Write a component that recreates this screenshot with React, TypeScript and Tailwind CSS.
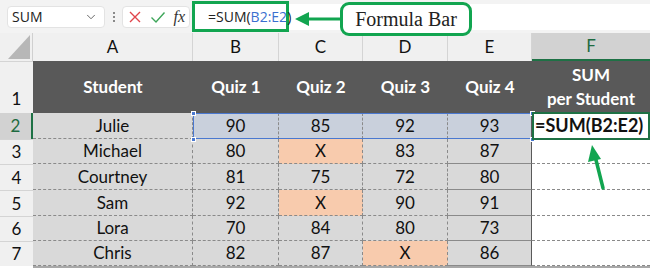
import { ChevronDown } from "lucide-react"

const cols = ["A", "B", "C", "D", "E", "F"]

const students = [
  { name: "Julie", q: ["90", "85", "92", "93"] },
  { name: "Michael", q: ["80", "X", "83", "87"] },
  { name: "Courtney", q: ["81", "75", "72", "80"] },
  { name: "Sam", q: ["92", "X", "90", "91"] },
  { name: "Lora", q: ["70", "84", "80", "73"] },
  { name: "Chris", q: ["82", "87", "X", "86"] },
]

const rowHeights = ["h-[26px]", "h-[25px]", "h-[26px]", "h-[26px]", "h-[25px]", "h-[25px]"]

function Toolbar() {
  return (
    <div className="h-[33px] bg-[#f3f3f3] flex items-center pl-[7px]">
      <div className="w-[98px] h-[22px] bg-white rounded-[4px] border border-[#e3e3e3] flex items-center justify-between pl-[4px] pr-[6px]">
        <span className="text-[14px] text-[#222]" style={{ fontFamily: "'Open Sans', sans-serif" }}>
          SUM
        </span>
        <ChevronDown size={14} strokeWidth={1.5} className="text-[#555]" />
      </div>
      <div className="flex flex-col gap-[2px] ml-[8px]">
        <span className="w-[2px] h-[2px] bg-[#666] rounded-full" />
        <span className="w-[2px] h-[2px] bg-[#666] rounded-full" />
        <span className="w-[2px] h-[2px] bg-[#666] rounded-full" />
      </div>
      <div className="w-[68px] h-[22px] ml-[7px] bg-white rounded-[4px] border border-[#e3e3e3] flex items-center justify-between pl-[5px] pr-[4px]">
        <svg width="14" height="14" viewBox="0 0 14 14">
          <path d="M2 2 L12 12 M12 2 L2 12" stroke="#e0454b" strokeWidth="1.4" fill="none" />
        </svg>
        <svg width="16" height="14" viewBox="0 0 16 14">
          <path d="M1.5 7.5 L6 12 L14.5 2.5" stroke="#3ea65a" strokeWidth="1.4" fill="none" />
        </svg>
        <span className="text-[16px] italic text-[#333] leading-none" style={{ fontFamily: "'Liberation Serif', serif" }}>
          fx
        </span>
      </div>
      <div className="flex-1 h-[26px] bg-white ml-[2px] flex items-center">
        <div className="w-[97px] h-[31px] border-[3px] border-[#12a550] flex items-center pl-[13px]">
          <span className="text-[14px] text-[#222]" style={{ fontFamily: "'Open Sans', sans-serif" }}>
            =SUM(<span className="text-[#3a6fcf]">B2:E2</span>)
          </span>
        </div>
      </div>
    </div>
  )
}

export default function App() {
  const font = { fontFamily: "Lato, 'Noto Sans', sans-serif" }
  return (
    <div className="relative w-[650px] h-[268px] overflow-hidden bg-white" style={font}>
      <Toolbar />

      <div className="grid grid-cols-[33px_160px_86px_84px_85px_84px_118px] text-[#111]">
        {/* column letters */}
        <div className="h-[28px] bg-[#f0f0f0] border-r border-[#d0d0d0] flex items-end justify-end p-[2px]">
          <svg width="22" height="24" viewBox="0 0 22 24">
            <path d="M22 0 L22 24 L0 24 Z" fill="#b7b7b7" />
          </svg>
        </div>
        {cols.map((c) => (
          <div
            key={c}
            className={
              c === "F"
                ? "h-[28px] bg-[#d2d2d2] text-[#1e6b41] border-b-2 border-[#1e7145] flex items-center justify-center text-[17px]"
                : "h-[28px] bg-[#f0f0f0] border-r border-[#d4d4d4] flex items-center justify-center text-[17px]"
            }
          >
            {c}
          </div>
        ))}

        {/* row 1 header */}
        <div className="h-[52px] bg-[#f0f0f0] border-t border-[#d4d4d4] flex items-end justify-center pb-[2px] text-[17px]">
          1
        </div>
        <div className="h-[52px] bg-[#595959] text-white font-bold text-[17px] flex items-center justify-center">Student</div>
        {["Quiz 1", "Quiz 2", "Quiz 3", "Quiz 4"].map((q) => (
          <div key={q} className="h-[52px] bg-[#595959] text-white font-bold text-[17px] flex items-center justify-center">
            {q}
          </div>
        ))}
        <div className="h-[52px] bg-[#595959] text-white font-bold text-[17px] leading-[24px] flex flex-col items-center justify-center">
          <span>SUM</span>
          <span>per Student</span>
        </div>

        {students.map((s, i) => {
          const h = rowHeights[i]
          const selected = i === 0
          return [
            <div
              key={`rh${i}`}
              className={
                selected
                  ? `${h} bg-[#d2d2d2] text-[#1e6b41] border-r-2 border-[#1e7145] flex items-center justify-center text-[17px]`
                  : `${h} bg-[#f0f0f0] border-t border-[#d4d4d4] flex items-center justify-center text-[17px]`
              }
            >
              {i + 2}
            </div>,
            <div
              key={`n${i}`}
              className={`${h} bg-[#d9d9d9] border-b border-r border-dashed border-[#8a8a8a] flex items-center justify-center text-[17px]`}
            >
              {s.name}
            </div>,
            ...s.q.map((v, j) => (
              <div
                key={`q${i}${j}`}
                className={`${h} ${
                  selected ? "bg-[#c9d0dc]" : v === "X" ? "bg-[#f8cbad]" : "bg-[#d9d9d9]"
                } border-b border-r border-dashed border-[#8a8a8a] flex items-center justify-center text-[17px] ${
                  j === 3 ? "border-solid border-r-[#595959]" : ""
                }`}
              >
                {v}
              </div>
            )),
            <div
              key={`f${i}`}
              className={`${h} bg-white border-b border-dashed border-[#8a8a8a] flex items-center pl-[3px] text-[18px] font-bold`}
            >
              {selected ? "=SUM(B2:E2)" : ""}
            </div>,
          ]
        })}
      </div>
      <div className="h-[2px] bg-[#a8a8a8] ml-[33px]" />

      {/* selection B2:E2 */}
      <div className="absolute left-[193px] top-[113px] w-[340px] h-[26px] border border-[#4a78d0] pointer-events-none" />
      {[
        [191, 111],
        [191, 137],
        [530, 111],
        [530, 137],
      ].map(([x, y], k) => (
        <div key={k} className="absolute w-[5px] h-[5px] bg-[#4a78d0] border border-white" style={{ left: x, top: y }} />
      ))}

      {/* active cell F2 */}
      <div className="absolute left-[532px] top-[112px] w-[118px] h-[28px] border-2 border-[#1e7145] pointer-events-none" />

      {/* formula bar callout */}
      <svg className="absolute left-[293px] top-[10px]" width="50" height="18" viewBox="0 0 50 18">
        <path d="M14 9 L50 9" stroke="#12a550" strokeWidth="3" />
        <path d="M2 9 L16 2 L16 16 Z" fill="#12a550" />
      </svg>
      <div className="absolute left-[340px] top-[2px] w-[132px] h-[34px] bg-white border-[3px] border-[#12a550] rounded-[9px] flex items-center justify-center">
        <span className="text-[20px] text-[#222]" style={{ fontFamily: "'Liberation Serif', serif" }}>
          Formula Bar
        </span>
      </div>

      {/* green arrow pointing to F2 */}
      <svg className="absolute left-[580px] top-[140px]" width="30" height="52" viewBox="0 0 30 52">
        <path d="M23 48 L15 16" stroke="#12a550" strokeWidth="3.5" strokeLinecap="round" />
        <path d="M12 5 L21 19 L8 22 Z" fill="#12a550" />
      </svg>
    </div>
  )
}
